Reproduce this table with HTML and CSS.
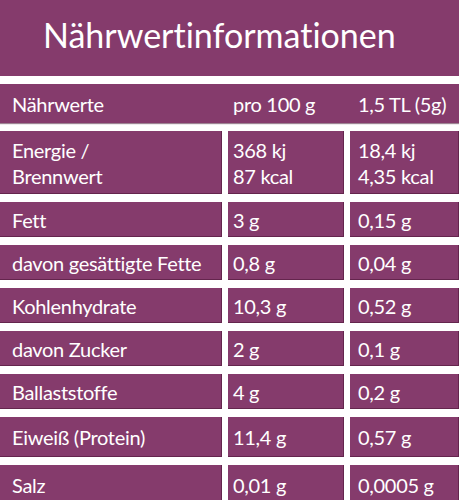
FILE: index.html
```html
<!DOCTYPE html>
<html lang="de">
<head>
    <meta charset="UTF-8">
    <meta name="viewport" content="width=device-width, initial-scale=1.0">
    <title>Nährwertinformationen</title>
    <link rel="stylesheet" href="styles.css">
</head>
<body>
    <div class="panel">
        <h1 class="panel-title">Nährwertinformationen</h1>

        <div class="nutrition-table">
            <div class="row head">
                <div class="cell">Nährwerte</div>
                <div class="cell">pro 100 g</div>
                <div class="cell">1,5 TL (5g)</div>
            </div>

            <div class="row tall">
                <div class="cell">Energie /<br>Brennwert</div>
                <div class="cell">368 kj<br>87 kcal</div>
                <div class="cell">18,4 kj<br>4,35 kcal</div>
            </div>

            <div class="row">
                <div class="cell">Fett</div>
                <div class="cell">3 g</div>
                <div class="cell">0,15 g</div>
            </div>

            <div class="row">
                <div class="cell">davon gesättigte Fette</div>
                <div class="cell">0,8 g</div>
                <div class="cell">0,04 g</div>
            </div>

            <div class="row">
                <div class="cell">Kohlenhydrate</div>
                <div class="cell">10,3 g</div>
                <div class="cell">0,52 g</div>
            </div>

            <div class="row">
                <div class="cell">davon Zucker</div>
                <div class="cell">2 g</div>
                <div class="cell">0,1 g</div>
            </div>

            <div class="row">
                <div class="cell">Ballaststoffe</div>
                <div class="cell">4 g</div>
                <div class="cell">0,2 g</div>
            </div>

            <div class="row wide">
                <div class="cell">Eiweiß (Protein)</div>
                <div class="cell">11,4 g</div>
                <div class="cell">0,57 g</div>
            </div>

            <div class="row last">
                <div class="cell">Salz</div>
                <div class="cell">0,01 g</div>
                <div class="cell">0,0005 g</div>
            </div>
        </div>
    </div>
</body>
</html>
```

FILE: styles.css
```css
* {
    margin: 0;
    padding: 0;
    box-sizing: border-box;
}

html,
body {
    width: 100%;
    height: 100%;
    overflow: hidden;
}

body {
    font-family: Lato, "Open Sans", sans-serif;
    font-variant-ligatures: none;
    background: #ffffff;
    color: #ffffff;
}

.panel {
    display: flex;
    flex-direction: column;
    gap: 8px;
}

.panel-title {
    height: 76px;
    background: #853b6c;
    font-size: 34px;
    font-weight: 400;
    line-height: 70px;
    padding-left: 43px;
}

/* Tabelle */
.nutrition-table {
    display: flex;
    flex-direction: column;
    gap: 8px;
}

.row {
    display: grid;
    grid-template-columns: 222px 116px 1fr;
    column-gap: 6px;
    height: 35px;
    font-size: 20px;
    letter-spacing: -0.3px;
}

.row.head {
    height: 39px;
    background: #853b6c;
    box-shadow: 0 1px 1px rgba(60, 10, 40, 0.5);
}

.row.tall {
    height: 63px;
}

.row.wide {
    height: 40px;
}

.row.last {
    height: 40px;
}

.cell {
    display: flex;
    align-items: center;
    padding-left: 12px;
    line-height: 26px;
    white-space: nowrap;
}

.row:not(.head) .cell {
    background: #853b6c;
    box-shadow: inset -1px -1px 0 rgba(60, 10, 40, 0.45);
}

.cell:nth-child(2) {
    padding-left: 5px;
}

.cell:nth-child(3) {
    padding-left: 8px;
}
```
